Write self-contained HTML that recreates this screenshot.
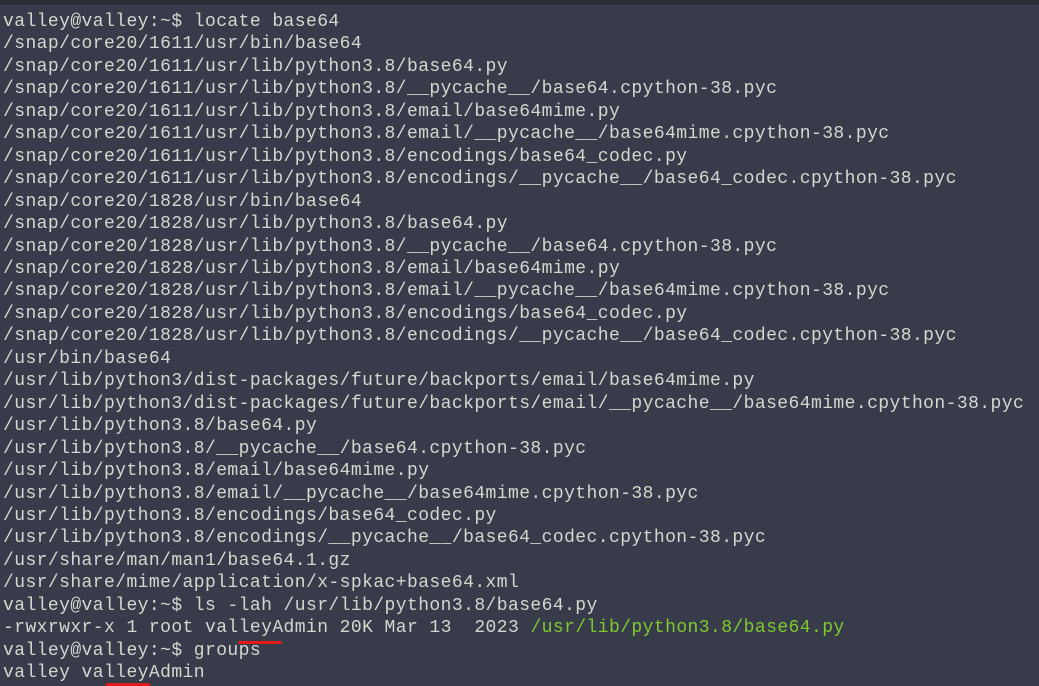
<!DOCTYPE html>
<html><head><meta charset="utf-8"><style>
html,body{margin:0;padding:0;}
body{width:1039px;height:685px;background:#383c4a;overflow:hidden;position:relative;}
.top{position:absolute;left:0;top:0;width:1039px;height:5px;background:#2b2e39;}
pre{position:absolute;left:3px;top:11px;margin:0;font-family:"Liberation Mono",monospace;font-size:18px;letter-spacing:0.42px;line-height:22.45px;color:#d3d7cf;}
.g{color:#7fc92f;}
.u{position:absolute;height:3px;background:#e01b1b;border-radius:2px;}
</style></head><body>
<div class="top"></div>
<pre>valley@valley:~$ locate base64
/snap/core20/1611/usr/bin/base64
/snap/core20/1611/usr/lib/python3.8/base64.py
/snap/core20/1611/usr/lib/python3.8/__pycache__/base64.cpython-38.pyc
/snap/core20/1611/usr/lib/python3.8/email/base64mime.py
/snap/core20/1611/usr/lib/python3.8/email/__pycache__/base64mime.cpython-38.pyc
/snap/core20/1611/usr/lib/python3.8/encodings/base64_codec.py
/snap/core20/1611/usr/lib/python3.8/encodings/__pycache__/base64_codec.cpython-38.pyc
/snap/core20/1828/usr/bin/base64
/snap/core20/1828/usr/lib/python3.8/base64.py
/snap/core20/1828/usr/lib/python3.8/__pycache__/base64.cpython-38.pyc
/snap/core20/1828/usr/lib/python3.8/email/base64mime.py
/snap/core20/1828/usr/lib/python3.8/email/__pycache__/base64mime.cpython-38.pyc
/snap/core20/1828/usr/lib/python3.8/encodings/base64_codec.py
/snap/core20/1828/usr/lib/python3.8/encodings/__pycache__/base64_codec.cpython-38.pyc
/usr/bin/base64
/usr/lib/python3/dist-packages/future/backports/email/base64mime.py
/usr/lib/python3/dist-packages/future/backports/email/__pycache__/base64mime.cpython-38.pyc
/usr/lib/python3.8/base64.py
/usr/lib/python3.8/__pycache__/base64.cpython-38.pyc
/usr/lib/python3.8/email/base64mime.py
/usr/lib/python3.8/email/__pycache__/base64mime.cpython-38.pyc
/usr/lib/python3.8/encodings/base64_codec.py
/usr/lib/python3.8/encodings/__pycache__/base64_codec.cpython-38.pyc
/usr/share/man/man1/base64.1.gz
/usr/share/mime/application/x-spkac+base64.xml
valley@valley:~$ ls -lah /usr/lib/python3.8/base64.py
-rwxrwxr-x 1 root valleyAdmin 20K Mar 13  2023 <span class="g">/usr/lib/python3.8/base64.py</span>
valley@valley:~$ groups
valley valleyAdmin</pre>
<div class="u" style="left:238px;top:641px;width:44px;"></div>
<div class="u" style="left:106px;top:683px;width:44px;"></div>
</body></html>
